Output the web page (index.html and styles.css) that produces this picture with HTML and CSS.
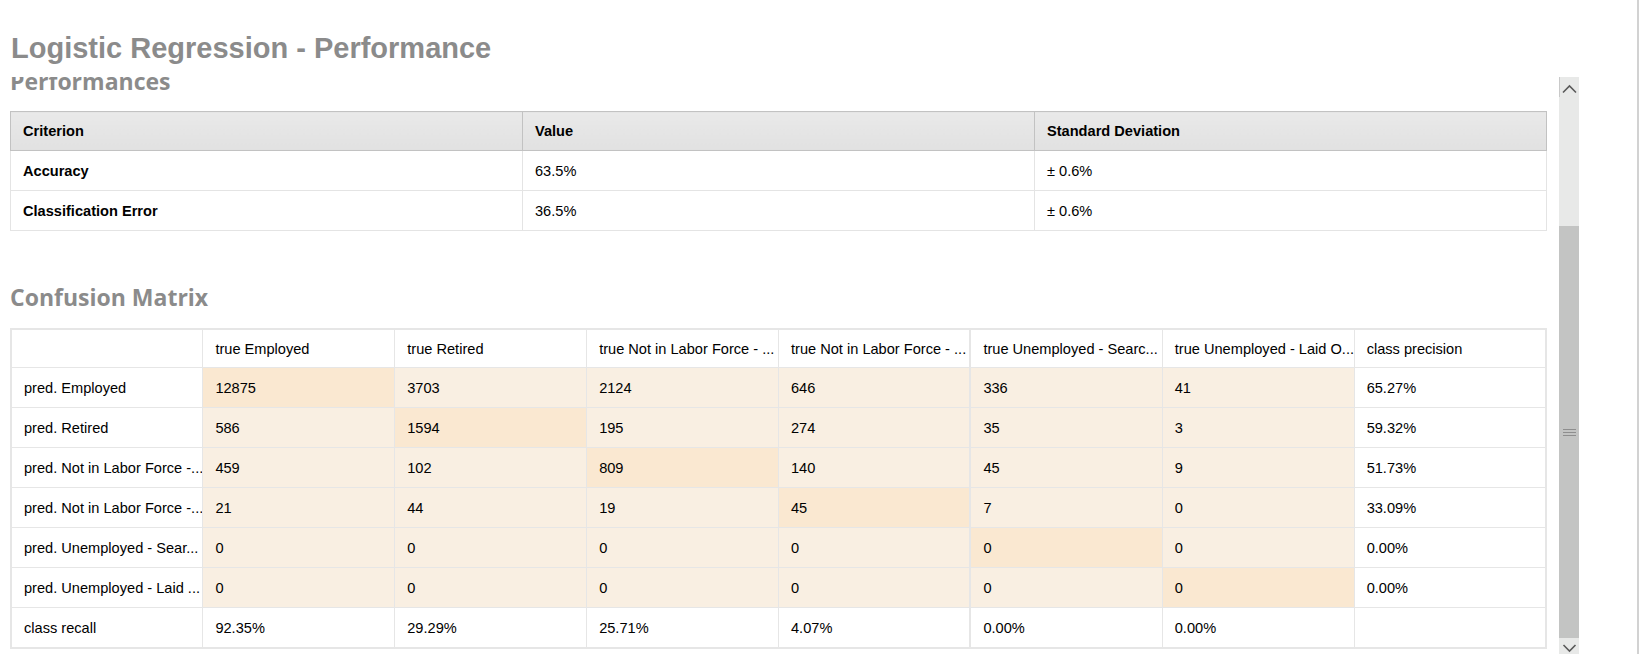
FILE: index.html
```html
<!DOCTYPE html>
<html lang="en">
<head>
<meta charset="utf-8">
<title>Logistic Regression - Performance</title>
<link rel="stylesheet" href="styles.css">
</head>
<body>
<div class="window">
  <div class="main">
    <header class="title-bar">
      <h1 class="page-title">Logistic Regression - Performance</h1>
    </header>
    <div class="viewport">
      <div class="scroll-area">
        <div class="scroll-content">
          <h2 class="section-title">Performances</h2>
          <table class="perf-table">
            <thead>
              <tr><th>Criterion</th><th>Value</th><th>Standard Deviation</th></tr>
            </thead>
            <tbody>
              <tr><td class="crit">Accuracy</td><td>63.5%</td><td>± 0.6%</td></tr>
              <tr><td class="crit">Classification Error</td><td>36.5%</td><td>± 0.6%</td></tr>
            </tbody>
          </table>

          <h2 class="section-title cm-title">Confusion Matrix</h2>
          <table class="cm-table">
            <thead>
              <tr>
                <th></th>
                <th>true Employed</th>
                <th>true Retired</th>
                <th>true Not in Labor Force - ...</th>
                <th>true Not in Labor Force - ...</th>
                <th class="split">true Unemployed - Searc...</th>
                <th>true Unemployed - Laid O...</th>
                <th>class precision</th>
              </tr>
            </thead>
            <tbody>
              <tr>
                <td>pred. Employed</td>
                <td class="hi">12875</td><td class="lo">3703</td><td class="lo">2124</td><td class="lo">646</td>
                <td class="lo split">336</td><td class="lo">41</td><td>65.27%</td>
              </tr>
              <tr>
                <td>pred. Retired</td>
                <td class="lo">586</td><td class="hi">1594</td><td class="lo">195</td><td class="lo">274</td>
                <td class="lo split">35</td><td class="lo">3</td><td>59.32%</td>
              </tr>
              <tr>
                <td>pred. Not in Labor Force -...</td>
                <td class="lo">459</td><td class="lo">102</td><td class="hi">809</td><td class="lo">140</td>
                <td class="lo split">45</td><td class="lo">9</td><td>51.73%</td>
              </tr>
              <tr>
                <td>pred. Not in Labor Force -...</td>
                <td class="lo">21</td><td class="lo">44</td><td class="lo">19</td><td class="hi">45</td>
                <td class="lo split">7</td><td class="lo">0</td><td>33.09%</td>
              </tr>
              <tr>
                <td>pred. Unemployed - Sear...</td>
                <td class="lo">0</td><td class="lo">0</td><td class="lo">0</td><td class="lo">0</td>
                <td class="hi split">0</td><td class="lo">0</td><td>0.00%</td>
              </tr>
              <tr>
                <td>pred. Unemployed - Laid ...</td>
                <td class="lo">0</td><td class="lo">0</td><td class="lo">0</td><td class="lo">0</td>
                <td class="lo split">0</td><td class="hi">0</td><td>0.00%</td>
              </tr>
              <tr>
                <td>class recall</td>
                <td>92.35%</td><td>29.29%</td><td>25.71%</td><td>4.07%</td>
                <td class="split">0.00%</td><td>0.00%</td><td></td>
              </tr>
            </tbody>
          </table>
        </div>
      </div>
      <div class="scrollbar">
        <div class="sb-btn sb-up">
          <svg width="20" height="20" viewBox="0 0 20 20"><polyline points="4,15.5 10.5,9 17,15.5" fill="none" stroke="#5a5a5a" stroke-width="1.6"/></svg>
        </div>
        <div class="sb-gap"></div>
        <div class="sb-thumb">
          <span class="grip"></span>
          <span class="grip"></span>
          <span class="grip"></span>
        </div>
        <div class="sb-btn sb-down">
          <svg width="20" height="20" viewBox="0 0 20 20"><polyline points="4.5,7 10.5,13 16.5,7" fill="none" stroke="#5a5a5a" stroke-width="1.6"/></svg>
        </div>
      </div>
    </div>
  </div>
  <div class="gutter"></div>
  <div class="edge"></div>
</div>
</body>
</html>
```

FILE: styles.css
```css
html, body {
  margin: 0;
  padding: 0;
  background: #ffffff;
}

.window {
  display: flex;
  width: 1642px;
  height: 654px;
  overflow: hidden;
  background: #ffffff;
}

.main {
  flex: 0 0 1579px;
  display: flex;
  flex-direction: column;
}

.gutter {
  flex: 1 1 auto;
}

.edge {
  flex: 0 0 2px;
  margin-right: 3px;
  background: #d2d2d2;
}

.title-bar {
  height: 77px;
  box-sizing: border-box;
  padding: 32px 0 0 11px;
}

.page-title {
  margin: 0;
  font-family: "Liberation Sans", Arial, sans-serif;
  font-weight: 700;
  font-size: 29px;
  line-height: 32px;
  color: #8b8b8b;
  white-space: nowrap;
}

.viewport {
  display: flex;
  height: 577px;
}

.scroll-area {
  flex: 0 0 1559px;
  overflow: hidden;
}

.scroll-content {
  margin-top: -12px;
  padding: 0 12px 0 10px;
}

.section-title {
  margin: 0;
  font-family: "Open Sans", sans-serif;
  font-weight: 700;
  font-size: 23px;
  line-height: 32px;
  color: #8b8b8b;
}

.cm-title {
  margin-top: 50px;
}

table {
  width: 100%;
  table-layout: fixed;
  border-collapse: collapse;
  font-family: "Liberation Sans", Arial, sans-serif;
  font-size: 14.6px;
  color: #000000;
}

th, td {
  text-align: left;
  padding: 0 12px;
  white-space: nowrap;
  overflow: hidden;
}

/* Performance table */
.perf-table {
  margin-top: 14px;
  border: 1px solid #e4e4e4;
}

.perf-table th {
  height: 38px;
  font-weight: 700;
  background: linear-gradient(#e9e9e9, #e1e1e1);
  border: 1px solid #c2c2c2;
}

.perf-table td {
  height: 39px;
  border: 1px solid #e4e4e4;
}

.perf-table td.crit {
  font-weight: 700;
}

/* Confusion matrix */
.cm-table {
  margin-top: 15px;
  border: 2px solid #e6e6e6;
}

.cm-table th {
  height: 37px;
  font-weight: 400;
  background: #ffffff;
  border: 1px solid #e6e6e6;
}

.cm-table td {
  height: 39px;
  border: 1px solid #e6e6e6;
}

.cm-table .split {
  border-left-width: 2px;
}

.cm-table td.hi {
  background: #fae8d1;
}

.cm-table td.lo {
  background: #f9efe2;
}

/* Scrollbar */
.scrollbar {
  flex: 0 0 20px;
  display: flex;
  flex-direction: column;
  overflow: hidden;
  background: #e8e9e8;
}

.sb-btn {
  flex: 0 0 20px;
  height: 20px;
}

.sb-btn svg {
  display: block;
}

.sb-up {
  box-sizing: border-box;
  border-left: 1px solid #c9c9c9;
}

.sb-up svg {
  margin-left: -1px;
}

.sb-gap {
  flex: 0 0 129px;
}

.sb-thumb {
  flex: 0 0 412px;
  background: #c3c4c3;
  display: flex;
  flex-direction: column;
  justify-content: center;
  align-items: center;
  gap: 2px;
}

.grip {
  display: block;
  width: 13px;
  height: 1px;
  background: #8e8e8e;
}
```
